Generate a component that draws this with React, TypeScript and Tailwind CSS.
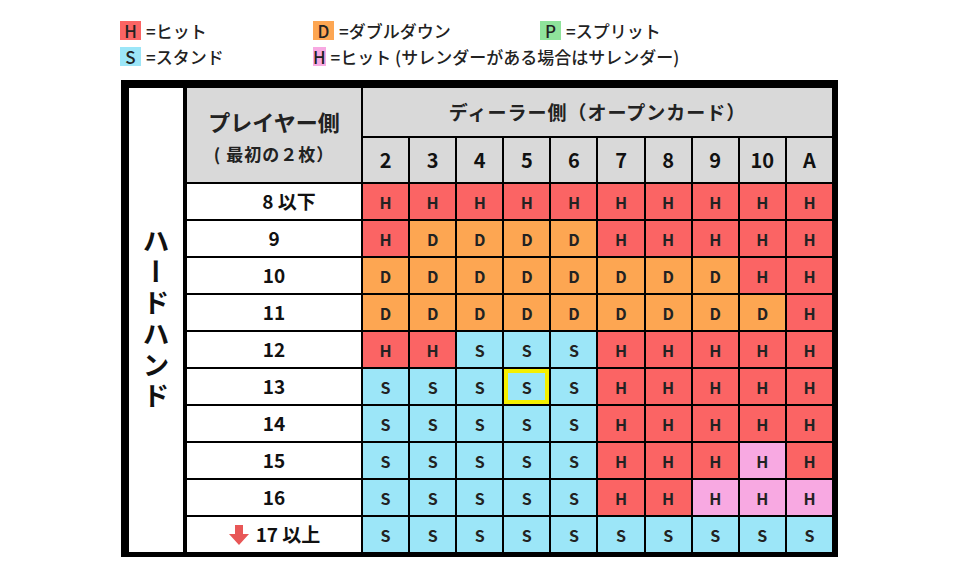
const FONT = { fontFamily: '"Noto Sans CJK JP", "Noto Sans", sans-serif' };

type Cell = 'H' | 'D' | 'S' | 'P' | 'R';

const DEALER = ['2', '3', '4', '5', '6', '7', '8', '9', '10', 'A'];

const ROWS: { label: string; cells: Cell[]; arrow?: boolean; shift?: boolean }[] = [
  { label: '8 以下', cells: 'HHHHHHHHHH'.split('') as Cell[], shift: true },
  { label: '9', cells: 'HDDDDHHHHH'.split('') as Cell[] },
  { label: '10', cells: 'DDDDDDDDHH'.split('') as Cell[] },
  { label: '11', cells: 'DDDDDDDDDH'.split('') as Cell[] },
  { label: '12', cells: 'HHSSSHHHHH'.split('') as Cell[] },
  { label: '13', cells: 'SSSSSHHHHH'.split('') as Cell[] },
  { label: '14', cells: 'SSSSSHHHHH'.split('') as Cell[] },
  { label: '15', cells: 'SSSSSHHHRH'.split('') as Cell[] },
  { label: '16', cells: 'SSSSSHHRRR'.split('') as Cell[] },
  { label: '17 以上', cells: 'SSSSSSSSSS'.split('') as Cell[], arrow: true },
];

const BG: Record<Cell, string> = {
  H: 'bg-[#fb6464]',
  D: 'bg-[#fda652]',
  S: 'bg-[#9ce6f8]',
  P: 'bg-[#8fe39b]',
  R: 'bg-[#f8a9e2]',
};

function LegendItem({ kind, letter, text }: { kind: Cell; letter: string; text: string }) {
  return (
    <div className="flex items-center gap-[5px] whitespace-nowrap">
      <span
        className={`${BG[kind]} w-[21px] h-[19px] flex items-center justify-center text-[17px] font-medium text-[#222] leading-none`}
      >
        {letter}
      </span>
      <span className="text-[17px] font-medium text-[#222] leading-none">{text}</span>
    </div>
  );
}

function ArrowDown() {
  return (
    <svg width="22" height="22" viewBox="0 0 22 22" className="mr-[6px]">
      <polygon points="7,1 15,1 15,10 21,10 11,21 1,10 7,10" fill="#e85757" />
    </svg>
  );
}

export default function App() {
  return (
    <div className="w-[960px] h-[576px] bg-white pt-[21px]" style={FONT}>
      {/* Legend */}
      <div className="ml-[120px] grid grid-cols-[193px_227px_200px] gap-y-[7px]">
        <LegendItem kind="H" letter="H" text="=ヒット" />
        <LegendItem kind="D" letter="D" text="=ダブルダウン" />
        <LegendItem kind="P" letter="P" text="=スプリット" />
        <LegendItem kind="S" letter="S" text="=スタンド" />
        <LegendItem kind="R" letter="H" text="=ヒット (サレンダーがある場合はサレンダー)" />
      </div>

      {/* Chart */}
      <div className="ml-[121px] mt-[14px] w-[717px] h-[477px] border-black border-l-8 border-t-8 border-r-[6px] border-b-[5px] flex bg-black">
        <div className="w-[54px] bg-white flex items-center justify-center">
          <span className="[writing-mode:vertical-rl] text-[27px] font-bold tracking-[4px] text-[#111] leading-none">
            ハードハンド
          </span>
        </div>
        <div className="w-[4px]" />
        <div className="flex-1 grid grid-cols-[174px_repeat(10,1fr)] grid-rows-[48px_44px_repeat(10,35px)] gap-[2px] bg-black">
          <div className="row-span-2 bg-[#d9d9d9] flex flex-col items-center justify-center pt-[2px]">
            <span className="text-[22px] font-bold text-[#222] leading-none">プレイヤー側</span>
            <span className="text-[17px] font-bold text-[#222] leading-none mt-[13px] tracking-[1px]">( 最初の２枚）</span>
          </div>
          <div className="col-span-10 bg-[#d9d9d9] flex items-center justify-center">
            <span className="text-[19px] font-bold text-[#222] tracking-[1px]">ディーラー側（オープンカード）</span>
          </div>
          {DEALER.map((d) => (
            <div key={d} className="bg-[#d9d9d9] flex items-center justify-center text-[20px] font-bold text-[#111]">
              {d}
            </div>
          ))}
          {ROWS.map((row, ri) => (
            <div key={row.label} className="contents">
              <div className="bg-white flex items-center justify-center text-[19px] font-bold text-[#111]">
                {row.arrow && <ArrowDown />}
                <span className={row.shift ? 'ml-[30px]' : ''}>{row.label}</span>
              </div>
              {row.cells.map((c, ci) => (
                <div
                  key={ci}
                  className={`${BG[c]} flex items-center justify-center text-[16px] font-bold text-[#222] ${
                    ri === 5 && ci === 3 ? 'border-[4px] border-[#f5ef00]' : ''
                  }`}
                >
                  {c === 'R' ? 'H' : c}
                </div>
              ))}
            </div>
          ))}
        </div>
      </div>
    </div>
  );
}
